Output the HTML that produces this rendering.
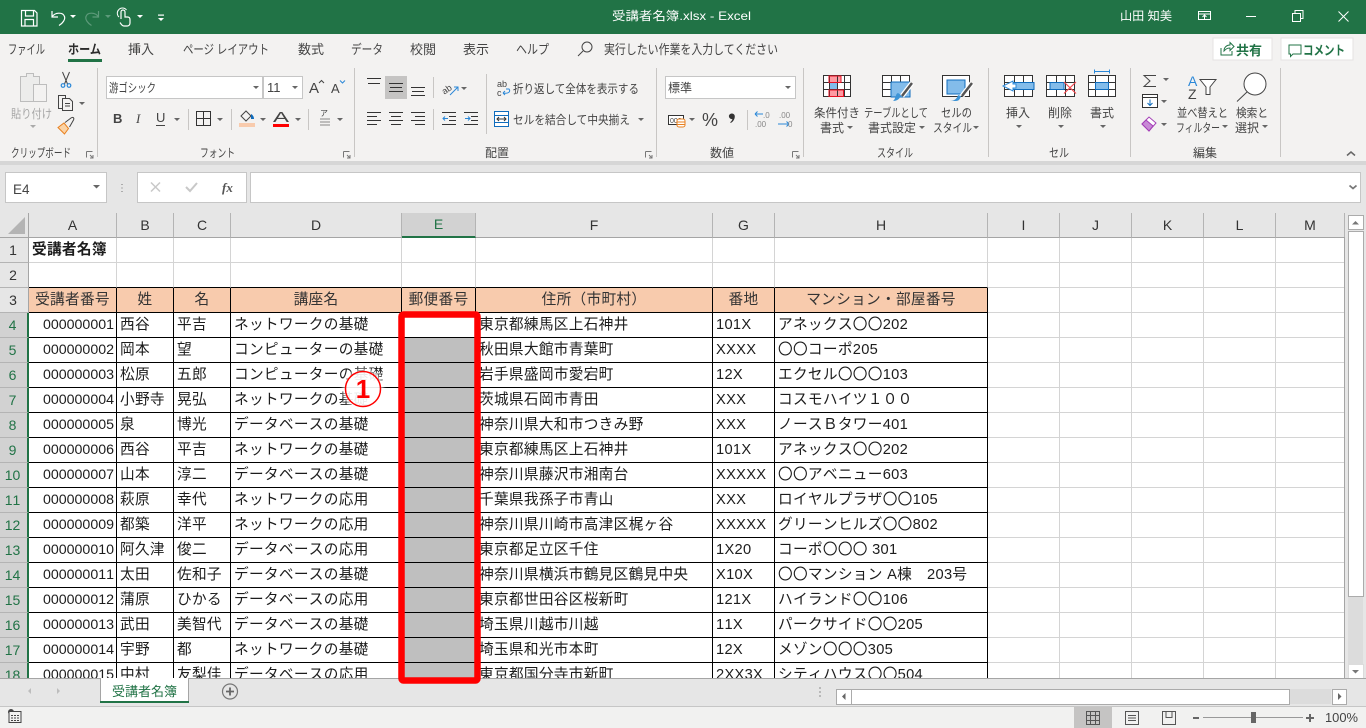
<!DOCTYPE html>
<html lang="ja"><head><meta charset="utf-8"><title>受講者名簿.xlsx - Excel</title>
<style>
html,body{margin:0;padding:0;width:1366px;height:728px;overflow:hidden;background:#e6e6e6}
body{position:relative;font-family:"Liberation Sans","Noto Sans CJK JP",sans-serif}
#g{position:absolute;left:0;top:213px;width:1345px;height:465px;overflow:hidden;background:#fff}
table{border-collapse:separate;border-spacing:0;table-layout:fixed;width:1345px;font-size:14.67px;color:#1c1c1c;font-kerning:none}
tr{height:25px}
td,th{box-sizing:border-box;height:25px;padding:1px 0 0 3px;border-right:1px solid #d4d4d4;border-bottom:1px solid #d4d4d4;white-space:nowrap;overflow:hidden;font-weight:400;line-height:23px;text-align:left;letter-spacing:.3px}
.h td{background:#e6e6e6;border-color:#b4b4b4;color:#333;text-align:center;padding:0;font-size:14px;border-bottom-color:#a5a5a5;letter-spacing:0}
td.r{background:#e6e6e6;border-right:1px solid #a5a5a5;border-bottom-color:#b4b4b4;color:#333;text-align:center;padding:0 2px 0 0;font-size:14px;letter-spacing:0}
td.s{background:#d2d2d2;color:#217346;border-right:2px solid #217346}
.h td.e{background:#d2d2d2;color:#217346;border-bottom:2px solid #217346}
.b{border-right-color:#000;border-bottom-color:#000}
.t td.b{background:#f8cbad;text-align:center;padding:1px 0 0 0;color:#333}
.u td.b{border-bottom-color:#000}
td.n{text-align:right;padding:1px 2px 0 0;font-size:14.2px;letter-spacing:0}
td.x{background:#bfbfbf}
td.w{background:#fff}
svg{position:absolute;left:0;top:0}
text{font-family:"Liberation Sans","Noto Sans CJK JP",sans-serif;font-size:12px;fill:#444}
.tab{font-size:13px}
.w1{fill:#fff}
.l{stroke:#444;stroke-width:1;fill:none}
.d{fill:#666}
</style></head><body>
<div id="g"><table>
<colgroup><col style="width:29px"><col style="width:88px"><col style="width:57px"><col style="width:57px"><col style="width:171px"><col style="width:74px"><col style="width:237px"><col style="width:62px"><col style="width:213px"><col style="width:72px"><col style="width:72px"><col style="width:72px"><col style="width:72px"><col style="width:69px"></colgroup>
<tr class="h"><td></td><td>A</td><td>B</td><td>C</td><td>D</td><td class="e">E</td><td>F</td><td>G</td><td>H</td><td>I</td><td>J</td><td>K</td><td>L</td><td>M</td></tr>
<tr><td class="r">1</td><td style="font-weight:700">受講者名簿</td><td></td><td></td><td></td><td></td><td></td><td></td><td></td><td></td><td></td><td></td><td></td><td></td></tr>
<tr class="u"><td class="r">2</td><td class="b" style="border-right-color:#d4d4d4"></td><td class="b" style="border-right-color:#d4d4d4"></td><td class="b" style="border-right-color:#d4d4d4"></td><td class="b" style="border-right-color:#d4d4d4"></td><td class="b" style="border-right-color:#d4d4d4"></td><td class="b" style="border-right-color:#d4d4d4"></td><td class="b" style="border-right-color:#d4d4d4"></td><td class="b" style="border-right-color:#d4d4d4"></td><td></td><td></td><td></td><td></td><td></td></tr>
<tr class="t"><td class="r">3</td><td class="b">受講者番号</td><td class="b">姓</td><td class="b">名</td><td class="b">講座名</td><td class="b">郵便番号</td><td class="b">住所（市町村）</td><td class="b">番地</td><td class="b">マンション・部屋番号</td><td></td><td></td><td></td><td></td><td></td></tr>
<tr><td class="r s">4</td><td class="b n">000000001</td><td class="b">西谷</td><td class="b">平吉</td><td class="b">ネットワークの基礎</td><td class="b w"></td><td class="b">東京都練馬区上石神井</td><td class="b">101X</td><td class="b">アネックス〇〇202</td><td></td><td></td><td></td><td></td><td></td></tr>
<tr><td class="r s">5</td><td class="b n">000000002</td><td class="b">岡本</td><td class="b">望</td><td class="b">コンピューターの基礎</td><td class="b x"></td><td class="b">秋田県大館市青葉町</td><td class="b">XXXX</td><td class="b">〇〇コーポ205</td><td></td><td></td><td></td><td></td><td></td></tr>
<tr><td class="r s">6</td><td class="b n">000000003</td><td class="b">松原</td><td class="b">五郎</td><td class="b">コンピューターの基礎</td><td class="b x"></td><td class="b">岩手県盛岡市愛宕町</td><td class="b">12X</td><td class="b">エクセル〇〇〇103</td><td></td><td></td><td></td><td></td><td></td></tr>
<tr><td class="r s">7</td><td class="b n">000000004</td><td class="b">小野寺</td><td class="b">晃弘</td><td class="b">ネットワークの基礎</td><td class="b x"></td><td class="b">茨城県石岡市青田</td><td class="b">XXX</td><td class="b">コスモハイツ１００</td><td></td><td></td><td></td><td></td><td></td></tr>
<tr><td class="r s">8</td><td class="b n">000000005</td><td class="b">泉</td><td class="b">博光</td><td class="b">データベースの基礎</td><td class="b x"></td><td class="b">神奈川県大和市つきみ野</td><td class="b">XXX</td><td class="b">ノースＢタワー401</td><td></td><td></td><td></td><td></td><td></td></tr>
<tr><td class="r s">9</td><td class="b n">000000006</td><td class="b">西谷</td><td class="b">平吉</td><td class="b">ネットワークの基礎</td><td class="b x"></td><td class="b">東京都練馬区上石神井</td><td class="b">101X</td><td class="b">アネックス〇〇202</td><td></td><td></td><td></td><td></td><td></td></tr>
<tr><td class="r s">10</td><td class="b n">000000007</td><td class="b">山本</td><td class="b">淳二</td><td class="b">データベースの基礎</td><td class="b x"></td><td class="b">神奈川県藤沢市湘南台</td><td class="b">XXXXX</td><td class="b">〇〇アベニュー603</td><td></td><td></td><td></td><td></td><td></td></tr>
<tr><td class="r s">11</td><td class="b n">000000008</td><td class="b">萩原</td><td class="b">幸代</td><td class="b">ネットワークの応用</td><td class="b x"></td><td class="b">千葉県我孫子市青山</td><td class="b">XXX</td><td class="b">ロイヤルプラザ〇〇105</td><td></td><td></td><td></td><td></td><td></td></tr>
<tr><td class="r s">12</td><td class="b n">000000009</td><td class="b">都築</td><td class="b">洋平</td><td class="b">ネットワークの応用</td><td class="b x"></td><td class="b">神奈川県川崎市高津区梶ヶ谷</td><td class="b">XXXXX</td><td class="b">グリーンヒルズ〇〇802</td><td></td><td></td><td></td><td></td><td></td></tr>
<tr><td class="r s">13</td><td class="b n">000000010</td><td class="b">阿久津</td><td class="b">俊二</td><td class="b">データベースの応用</td><td class="b x"></td><td class="b">東京都足立区千住</td><td class="b">1X20</td><td class="b">コーポ〇〇〇 301</td><td></td><td></td><td></td><td></td><td></td></tr>
<tr><td class="r s">14</td><td class="b n">000000011</td><td class="b">太田</td><td class="b">佐和子</td><td class="b">データベースの基礎</td><td class="b x"></td><td class="b">神奈川県横浜市鶴見区鶴見中央</td><td class="b">X10X</td><td class="b">〇〇マンション A棟　203号</td><td></td><td></td><td></td><td></td><td></td></tr>
<tr><td class="r s">15</td><td class="b n">000000012</td><td class="b">蒲原</td><td class="b">ひかる</td><td class="b">データベースの応用</td><td class="b x"></td><td class="b">東京都世田谷区桜新町</td><td class="b">121X</td><td class="b">ハイランド〇〇106</td><td></td><td></td><td></td><td></td><td></td></tr>
<tr><td class="r s">16</td><td class="b n">000000013</td><td class="b">武田</td><td class="b">美智代</td><td class="b">データベースの基礎</td><td class="b x"></td><td class="b">埼玉県川越市川越</td><td class="b">11X</td><td class="b">パークサイド〇〇205</td><td></td><td></td><td></td><td></td><td></td></tr>
<tr><td class="r s">17</td><td class="b n">000000014</td><td class="b">宇野</td><td class="b">都</td><td class="b">ネットワークの基礎</td><td class="b x"></td><td class="b">埼玉県和光市本町</td><td class="b">12X</td><td class="b">メゾン〇〇〇305</td><td></td><td></td><td></td><td></td><td></td></tr>
<tr><td class="r s">18</td><td class="b n">000000015</td><td class="b">中村</td><td class="b">友梨佳</td><td class="b">データベースの応用</td><td class="b x"></td><td class="b">東京都国分寺市新町</td><td class="b">2XX3X</td><td class="b">シティハウス〇〇504</td><td></td><td></td><td></td><td></td><td></td></tr>
</table></div>

<svg width="1366" height="728" viewBox="0 0 1366 728">
<defs><filter id="bl" x="-30%" y="-30%" width="160%" height="160%"><feGaussianBlur stdDeviation="2"/></filter></defs>
<!-- backgrounds -->
<rect x="0" y="0" width="1366" height="34" fill="#217346"/>
<rect x="0" y="34" width="1366" height="127" fill="#f3f2f1"/>
<rect x="0" y="161" width="1366" height="4" fill="#d6d6d6"/>
<rect x="0" y="165" width="1366" height="48" fill="#e6e6e6"/>
<rect x="1345" y="213" width="21" height="465" fill="#e6e6e6"/>
<rect x="1344" y="237" width="1" height="441" fill="#a5a5a5"/>
<!-- title bar -->
<g fill="none" stroke="#fff" stroke-width="1.2">
<path d="M21.5 10.500h13l2.500 2.500v13h-15.500z"/><path d="M25.500 10.500v5.500h8v-5.500"/><path d="M25 26v-6.500h8.500v6.500"/>
<path d="M52 11v6h6M52 17c3-5 11-5 12.500-.5c1 3-2 7-5.500 9"/>
<path d="M98.500 11v6h-6M98.500 17c-3-5-11-5-12.500-.5c-1 3 2 7 5.500 9" stroke="#5d9a7a"/>
<path d="M121 19v-7a2 2 0 0 1 4 0v5h2.500c2 0 2.500 1 2.500 3v3c0 2-1.500 3-3 3h-3c-2 0-3-2-4-3.500"/><path d="M119 17a5 5 0 0 1-.5-7a5 5 0 0 1 8 0" stroke-width="1"/>
</g>
<path d="M70 15h6l-3 3z" fill="#fff"/><path d="M105 15h6l-3 3z" fill="#5d9a7a"/>
<path d="M137 15h6l-3 3zM158 18h6l-3 3z" fill="#fff"/><rect x="158" y="14.500" width="6" height="1.200" fill="#fff"/>
<text x="612" y="20" class="w1" textLength="139" lengthAdjust="spacingAndGlyphs">受講者名簿.xlsx  -  Excel</text>
<text x="1120" y="20" class="w1" textLength="52" lengthAdjust="spacingAndGlyphs">山田 知美</text>
<g fill="none" stroke="#fff" stroke-width="1">
<path d="M1198.500 11.500h12v8h-12zM1198.500 14h12M1204.500 19v-3.500M1202.500 17l2-2l2 2"/>
<path d="M1246 16.500h10"/>
<path d="M1292.500 13.500h8v8h-8zM1295 13v-2.500h8v8h-2.500"/>
<path d="M1338.500 11.500l10 10M1348.500 11.500l-10 10"/>
</g>
<!-- tabs -->
<g class="tab">
<text class="tab" x="8" y="54" textLength="37" lengthAdjust="spacingAndGlyphs">ファイル</text>
<text class="tab" x="68" y="54" textLength="33" lengthAdjust="spacingAndGlyphs" style="font-weight:700;fill:#2b2b2b">ホーム</text>
<text class="tab" x="128" y="54" textLength="26" lengthAdjust="spacingAndGlyphs">挿入</text>
<text class="tab" x="183" y="54" textLength="86" lengthAdjust="spacingAndGlyphs">ページ レイアウト</text>
<text class="tab" x="298" y="54" textLength="26" lengthAdjust="spacingAndGlyphs">数式</text>
<text class="tab" x="351" y="54" textLength="32" lengthAdjust="spacingAndGlyphs">データ</text>
<text class="tab" x="410" y="54" textLength="26" lengthAdjust="spacingAndGlyphs">校閲</text>
<text class="tab" x="463" y="54" textLength="26" lengthAdjust="spacingAndGlyphs">表示</text>
<text class="tab" x="516" y="54" textLength="33" lengthAdjust="spacingAndGlyphs">ヘルプ</text>
<text class="tab" x="604" y="54" textLength="174" lengthAdjust="spacingAndGlyphs">実行したい作業を入力してください</text>
</g>
<rect x="68" y="59" width="34" height="3" fill="#217346"/>
<circle cx="587" cy="47" r="5" class="l"/><path d="M583 51l-5 5" class="l"/>
<rect x="1213" y="38" width="59" height="22" fill="#fff" stroke="#e4e3e2"/>
<rect x="1281" y="38" width="72" height="22" fill="#fff" stroke="#e4e3e2"/>
<path d="M1221 48v7h11v-4M1224 51c0-4 3-6 6-6v-2.500l4 4l-4 4v-2.500c-3 0-4 1-6 3z" fill="none" stroke="#217346"/>
<text x="1236" y="55" textLength="26" lengthAdjust="spacingAndGlyphs" style="font-size:13px;font-weight:700;fill:#217346">共有</text>
<path d="M1289 45h12v9h-8l-2.500 2.500v-2.500h-1.500z" fill="none" stroke="#217346"/>
<text x="1303" y="55" textLength="42" lengthAdjust="spacingAndGlyphs" style="font-size:13px;font-weight:700;fill:#217346">コメント</text>
<!-- separators -->
<g fill="#c8c6c4"><rect x="97" y="68" width="1" height="89"/><rect x="354" y="68" width="1" height="89"/><rect x="656" y="68" width="1" height="89"/><rect x="803" y="68" width="1" height="89"/><rect x="988" y="68" width="1" height="89"/><rect x="1130" y="68" width="1" height="89"/><rect x="1280" y="68" width="1" height="89"/>
<rect x="188" y="109" width="1" height="21"/><rect x="231" y="109" width="1" height="21"/><rect x="308" y="109" width="1" height="21"/><rect x="433" y="77" width="1" height="21"/><rect x="433" y="109" width="1" height="21"/><rect x="486" y="74" width="1" height="60"/><rect x="747" y="110" width="1" height="20"/></g>
<!-- group labels -->
<g>
<text x="11" y="157" textLength="60" lengthAdjust="spacingAndGlyphs">クリップボード</text>
<text x="200" y="157" textLength="35" lengthAdjust="spacingAndGlyphs">フォント</text>
<text x="485" y="157" textLength="24" lengthAdjust="spacingAndGlyphs">配置</text>
<text x="710" y="157" textLength="24" lengthAdjust="spacingAndGlyphs">数値</text>
<text x="877" y="157" textLength="36" lengthAdjust="spacingAndGlyphs">スタイル</text>
<text x="1049" y="157" textLength="20" lengthAdjust="spacingAndGlyphs">セル</text>
<text x="1193" y="157" textLength="24" lengthAdjust="spacingAndGlyphs">編集</text>
</g>
<g fill="none" stroke="#777" stroke-width="1"><path d="M86.500 151.500h6M86.500 151.500v6M90 155l3 3M93 155v3h-3"/><path d="M343.500 151.500h6M343.500 151.500v6M347 155l3 3M350 155v3h-3"/><path d="M645.500 151.500h6M645.500 151.500v6M649 155l3 3M652 155v3h-3"/><path d="M792.500 151.500h6M792.500 151.500v6M796 155l3 3M799 155v3h-3"/></g>
<path d="M1347 155.500l4-3.500l4 3.500" fill="none" stroke="#666" stroke-width="1.500"/>
<!-- clipboard -->
<path d="M20.500 76.500h6v-3h7v3h6v25h-19z" fill="#ececeb" stroke="#bdbdbd"/><rect x="33.500" y="84.500" width="13" height="17" fill="#f3f2f1" stroke="#bdbdbd"/>
<text x="11" y="118" textLength="41" lengthAdjust="spacingAndGlyphs" style="fill:#a6a6a6">貼り付け</text>
<path d="M30 125h6l-3 3z" fill="#aaa"/>
<path d="M62.500 72l5 12M69.500 72l-5 12" stroke="#444" fill="none"/><circle cx="63" cy="85.500" r="1.800" fill="none" stroke="#2b88d8" stroke-width="1.200"/><circle cx="69" cy="85.500" r="1.800" fill="none" stroke="#2b88d8" stroke-width="1.200"/>
<path d="M62 108.500h-3.500v-13h7v3" class="l"/><path d="M62.500 98.500h7l3 3v9h-10z" class="l"/><path d="M65 103.500h5M65 106h5" class="l"/><path d="M79 102h6l-3 3z" class="d"/>
<path d="M58 127.500l6-4.500l4.500 5.500l-4 5.500z" fill="#fbd3a5" stroke="#e8801f"/><path d="M65 122.500l6-4.500c2-1.500 3.500 0 2.500 2l-4 7" fill="none" stroke="#444"/>
<!-- font -->
<rect x="106.500" y="76.500" width="156" height="22" fill="#fff" stroke="#c6c6c6"/><rect x="263.500" y="76.500" width="39" height="22" fill="#fff" stroke="#c6c6c6"/>
<text x="109" y="92" textLength="47" lengthAdjust="spacingAndGlyphs">游ゴシック</text>
<text x="267" y="92" style="font-size:13px">11</text>
<path d="M253 86h6l-3 3zM292 86h6l-3 3z" class="d"/>
<text x="309" y="93" style="font-size:15px">A</text><path d="M319 83l2.500-2.500l2.500 2.500" class="l" stroke-width=".9"/>
<text x="331" y="93" style="font-size:13px">A</text><path d="M340 80.500l2.500 2.500l2.500-2.500" stroke="#2b88d8" fill="none"/>
<text x="113" y="123" style="font-size:13px;font-weight:700">B</text>
<text x="136" y="123" style="font-size:13px;font-style:italic;font-family:'Liberation Serif',serif">I</text>
<text x="156" y="122" style="font-size:13px">U</text><rect x="156" y="125" width="9" height="1" fill="#444"/>
<path d="M174 118h6l-3 3zM217 118h6l-3 3zM260 118h6l-3 3zM295 118h6l-3 3zM337 118h6l-3 3z" class="d"/>
<path d="M196.500 111.500h14v14h-14zM203.500 111.500v14M196.500 118.500h14" stroke="#333" fill="none"/>
<path d="M241 116l5-5l5 5l-5 5z" fill="none" stroke="#444"/><path d="M251 114c2 1 3 3 3 5h-3z" fill="#0f6cbd"/><rect x="239" y="123" width="16" height="4" fill="#f8cbad"/>
<text x="273" y="122" textLength="16" lengthAdjust="spacingAndGlyphs" style="font-size:15px">A</text><rect x="273" y="124" width="16" height="3" fill="#f00"/>
<text x="320" y="116" style="font-size:8px">ア</text><path d="M320 119h10M320 122h10M320 125h10" stroke="#888" fill="none"/>
<!-- align -->
<rect x="385" y="76" width="22" height="23" fill="#c5c4c3"/>
<g stroke="#333" fill="none">
<path d="M367 78.500h14M368 83.500h12M389 83.500h14M390 87.500h12M389 91.500h14M411 87.500h14M412 91.500h12M411 95.500h14"/>
<path d="M367 112.500h14M367 116.500h10M367 120.500h14M367 124.500h10M389 112.500h14M391 116.500h10M389 120.500h14M391 124.500h10M411 112.500h14M415 116.500h10M411 120.500h14M415 124.500h10"/>
<path d="M442 112.500h14M449 116.500h7M449 120.500h7M442 124.500h14M464 112.500h14M471 116.500h7M471 120.500h7M464 124.500h14"/>
</g>
<path d="M448 118.500h-5m2-2l-2 2l2 2M465 118.500h5m-2-2l2 2l-2 2" stroke="#2b88d8" fill="none"/>
<text x="441" y="92" transform="rotate(-35 447 88)" style="font-size:9px">ab</text><path d="M450 95l8-8m-4 0h4v4" stroke="#2b88d8" fill="none"/><path d="M461 87h6l-3 3z" class="d"/>
<text x="497" y="87" style="font-size:9px">ab</text><text x="497" y="96" style="font-size:9px">c</text><path d="M503 93c5 1 8-1 6-4h-3M503 93l2-2M503 93l2 2" stroke="#2b88d8" fill="none"/>
<text x="513" y="93" textLength="126" lengthAdjust="spacingAndGlyphs">折り返して全体を表示する</text>
<path d="M494.500 111.500h14v15h-14z" stroke="#0f6cbd" fill="#fff"/><path d="M494.500 115.500h14M494.500 122.500h14" stroke="#0f6cbd"/><path d="M497 119h9m-7-2l-2 2l2 2m5-4l2 2l-2 2" stroke="#333" fill="none"/>
<text x="513" y="124" textLength="117" lengthAdjust="spacingAndGlyphs">セルを結合して中央揃え</text>
<path d="M638 118h6l-3 3z" class="d"/>
<!-- number -->
<rect x="665.500" y="76.500" width="130" height="22" fill="#fff" stroke="#c6c6c6"/>
<text x="668" y="92" textLength="24" lengthAdjust="spacingAndGlyphs">標準</text>
<path d="M785 86h6l-3 3z" class="d"/>
<rect x="668.500" y="115.500" width="15" height="9" fill="#fff" stroke="#333"/><text x="670" y="123" style="font-size:7px">000</text><rect x="677" y="119" width="8" height="8" rx="2" fill="#fff" stroke="#e8801f"/><path d="M677 122h8M677 124.500h8" stroke="#e8801f"/>
<path d="M689 118h6l-3 3z" class="d"/>
<text x="702" y="126" style="font-size:18px">%</text>
<path d="M732 113.500a2.800 2.800 0 0 1 2.800 3c0 2.500-1.500 5-4 6.500l-.6-.7c1.200-1 2-2 2.200-3.300a2.800 2.800 0 1 1-.4-5.500z" fill="#333"/>
<path d="M755 114h8m-8 0l2.500-2.500m-2.500 2.500l2.500 2.500M778 124h11m0 0l-2.500-2.500m2.500 2.500l-2.500 2.500" stroke="#2b88d8" fill="none"/>
<text x="763" y="118" style="font-size:8px;fill:#888">.0</text><text x="755" y="127" style="font-size:8px;fill:#888">.00</text>
<text x="779" y="118" style="font-size:8px;fill:#888">.00</text><text x="788" y="127" style="font-size:8px;fill:#888">0</text>
<!-- styles -->
<g stroke="#333" fill="#fff"><rect x="823.500" y="75.500" width="27" height="21"/></g>
<rect x="829" y="76" width="12" height="6.500" fill="#ff9aa2" stroke="#e81123"/><rect x="829" y="90" width="14.500" height="6.500" fill="#ff9aa2" stroke="#e81123"/><rect x="829" y="83" width="8" height="7" fill="#83bcea"/>
<path d="M823.500 82.500h27M823.500 89.500h27M829.500 75.500v21M837.500 75.500v21M844.500 75.500v21" stroke="#333" fill="none"/>
<rect x="829" y="76" width="12" height="6.500" fill="none" stroke="#e81123"/><rect x="829" y="90" width="14.500" height="6.500" fill="none" stroke="#e81123"/>
<rect x="882.500" y="75.500" width="27" height="21" fill="#fff" stroke="#333"/><path d="M882.500 82.500h27M882.500 89.500h27M891.500 75.500v21M900.500 75.500v21" stroke="#333" fill="none"/><rect x="891" y="82" width="19" height="15" fill="#83bcea" stroke="#0f6cbd"/>
<path d="M912 83l-10 13" stroke="#fff" stroke-width="5"/><path d="M912 83l-10 13" stroke="#555" stroke-width="2.500"/><path d="M893 101c4 0 7-2 8-6l-3-2c-3 1-2 6-5 8z" fill="#3d94d6"/>
<rect x="942.500" y="75.500" width="27" height="21" fill="#fff" stroke="#333"/><rect x="947" y="80" width="18" height="14" fill="#83bcea" stroke="#0f6cbd"/>
<path d="M972 83l-10 13" stroke="#fff" stroke-width="5"/><path d="M972 83l-10 13" stroke="#555" stroke-width="2.500"/><path d="M950 101c4 0 7-2 8-6l3 1c-1 3-2 5-5 5z" fill="#3d94d6"/>
<text x="814" y="117" textLength="46" lengthAdjust="spacingAndGlyphs">条件付き</text><text x="820" y="132" textLength="24" lengthAdjust="spacingAndGlyphs">書式</text>
<text x="864" y="117" textLength="64" lengthAdjust="spacingAndGlyphs">テーブルとして</text><text x="868" y="132" textLength="48" lengthAdjust="spacingAndGlyphs">書式設定</text>
<text x="941" y="117" textLength="31" lengthAdjust="spacingAndGlyphs">セルの</text><text x="933" y="132" textLength="39" lengthAdjust="spacingAndGlyphs">スタイル</text>
<path d="M847 126h6l-3 3zM919 126h6l-3 3zM973 126h6l-3 3z" class="d"/>
<!-- cells -->
<g stroke="#333" fill="#fff"><rect x="1004.500" y="75.500" width="28" height="21"/><rect x="1046.500" y="75.500" width="28" height="21"/><rect x="1088.500" y="75.500" width="27" height="21"/></g>
<path d="M1004.500 82.500h28M1004.500 89.500h28M1014.500 75.500v21M1023.500 75.500v21M1046.500 82.500h28M1046.500 89.500h28M1056.500 75.500v21M1065.500 75.500v21M1088.500 82.500h27M1088.500 89.500h27M1095.500 75.500v21M1108.500 75.500v21" stroke="#333" fill="none"/>
<rect x="1012" y="82.500" width="22" height="7" fill="#83bcea" stroke="#0f6cbd"/><path d="M1013 84h3v4h-3v3l-10-5l10-5z" fill="#fff" stroke="#2b88d8"/>
<rect x="1050" y="82.500" width="14" height="7" fill="#83bcea" stroke="#0f6cbd"/><path d="M1064 82l12 11.500M1076 82l-12 11.500" stroke="#f4474d" stroke-width="1.200"/>
<rect x="1095.500" y="82.500" width="13" height="7" fill="#83bcea" stroke="#0f6cbd"/><path d="M1094.500 71.500h15M1094.500 69.500v4M1109.500 69.500v4" stroke="#2b88d8" fill="none"/>
<text x="1006" y="117" textLength="24" lengthAdjust="spacingAndGlyphs">挿入</text><text x="1048" y="117" textLength="24" lengthAdjust="spacingAndGlyphs">削除</text><text x="1090" y="117" textLength="24" lengthAdjust="spacingAndGlyphs">書式</text>
<path d="M1016 125h6l-3 3zM1058 125h6l-3 3zM1100 125h6l-3 3z" class="d"/>
<!-- edit -->
<path d="M1156 75.500h-12l6 5.500l-6 5.500h12" fill="none" stroke="#444"/><path d="M1163 78h6l-3 3zM1161 100h6l-3 3zM1161 123h6l-3 3z" class="d"/>
<rect x="1142.500" y="94.500" width="15" height="13" fill="#fff" stroke="#333"/><path d="M1142.500 97.500h15" stroke="#333"/><path d="M1150 99.500v6m-2.500-2.500l2.500 2.500l2.500-2.500" stroke="#0f6cbd" fill="none"/>
<path d="M1142 124l7-7l7 6l-7 8z" fill="#fff" stroke="#a43fb7"/><path d="M1142 124l4-4l7 6l-4 5z" fill="#c88ad6" stroke="#a43fb7"/>
<text x="1188" y="86" style="font-size:14px;fill:#2b88d8">A</text><text x="1188" y="99" style="font-size:14px">Z</text>
<path d="M1200 79.500h16l-6 7.500v7.500h-4v-7.500z" fill="#fff" stroke="#444"/>
<text x="1177" y="117" textLength="51" lengthAdjust="spacingAndGlyphs">並べ替えと</text><text x="1176" y="132" textLength="44" lengthAdjust="spacingAndGlyphs">フィルター</text>
<path d="M1222 125h6l-3 3z" class="d"/>
<circle cx="1255" cy="84" r="11" fill="#fff" stroke="#444"/><path d="M1247 92l-10 9.500" stroke="#444" fill="none"/>
<text x="1236" y="117" textLength="32" lengthAdjust="spacingAndGlyphs">検索と</text><text x="1235" y="132" textLength="24" lengthAdjust="spacingAndGlyphs">選択</text>
<path d="M1262 125h6l-3 3z" class="d"/>
<!-- formula bar -->
<rect x="5.500" y="172.500" width="101" height="30" fill="#fff" stroke="#c6c6c6"/>
<text x="13" y="194" style="font-size:13.500px">E4</text><path d="M93 185h7l-3.500 3.500z" class="d"/>
<path d="M122 184v1M122 187.500v1M122 191v1" stroke="#999" stroke-width="1.500"/>
<rect x="137.500" y="172.500" width="109" height="30" fill="#fff" stroke="#c6c6c6"/>
<path d="M151 182.500l9 9M160 182.500l-9 9" stroke="#c8c8c8" stroke-width="1.500" fill="none"/>
<path d="M186 187l4 4l7-8" stroke="#c8c8c8" stroke-width="2" fill="none"/>
<text x="222" y="192" style="font-size:13px;font-style:italic;font-weight:700;font-family:'Liberation Serif',serif;fill:#555">fx</text>
<rect x="250.500" y="172.500" width="1110" height="30" fill="#fff" stroke="#c6c6c6"/>
<path d="M1349.500 185.500l3.500 3l3.500-3" stroke="#777" stroke-width="1.800" fill="none"/>
<!-- corner triangle -->
<path d="M25 217v17h-17z" fill="#b4b4b4"/>
<rect x="28" y="213" width="1" height="25" fill="#a5a5a5"/>
<!-- vertical scrollbar -->
<rect x="1348" y="232" width="15" height="432" fill="#dcdcdc"/>
<rect x="1348.500" y="215.500" width="15" height="14" fill="#fff" stroke="#ababab"/>
<path d="M1352 224.500h7l-3.500-3.500z" fill="#777"/>
<rect x="1348.500" y="231.500" width="15" height="365" fill="#fff" stroke="#ababab"/>
<rect x="1348.500" y="664.500" width="15" height="14" fill="#fff" stroke="#dcdcdc"/>
<path d="M1352 670h7l-3.500 3.500z" fill="#777"/>
<!-- tab bar -->
<rect x="0" y="678" width="1366" height="28" fill="#e6e6e6"/>
<rect x="0" y="678" width="1366" height="1" fill="#a5a5a5"/>
<path d="M31 688v6l-3-3zM57 688v6l3-3z" fill="#bdbdbd"/>
<rect x="100" y="678" width="89" height="24" fill="#fff"/><rect x="100" y="678" width="1" height="24" fill="#a5a5a5"/><rect x="188" y="678" width="1" height="24" fill="#a5a5a5"/><rect x="100" y="701" width="89" height="2" fill="#217346"/>
<text x="112" y="696" textLength="65" lengthAdjust="spacingAndGlyphs" style="font-size:13px;fill:#217346">受講者名簿</text>
<circle cx="230" cy="691.500" r="7.500" fill="none" stroke="#777" stroke-width="1.200"/><path d="M226 691.500h8M230 687.500v8" stroke="#666" stroke-width="1.800"/>
<path d="M820 687v2M820 691v2M820 695v2" stroke="#aaa" stroke-width="1.500"/>
<rect x="836" y="689" width="495" height="15" fill="#dcdcdc"/>
<rect x="836.500" y="689.500" width="15" height="15" fill="#fff" stroke="#ababab"/><path d="M845.500 693v7l-3.500-3.500z" fill="#666"/>
<rect x="851.500" y="689.500" width="438" height="15" fill="#fff" stroke="#ababab"/>
<rect x="1332.500" y="689.500" width="14" height="15" fill="#fff" stroke="#ababab"/><path d="M1338 693v7l3.500-3.500z" fill="#666"/>
<!-- status bar -->
<rect x="0" y="706" width="1366" height="22" fill="#f1f1f0"/><rect x="0" y="706" width="1366" height="1" fill="#c6c6c6"/>
<circle cx="11" cy="712" r="3" fill="#444"/><path d="M9 711.500h12v11h-12z" fill="#f1f1f0" stroke="#444"/><path d="M11 715.500h8M11 718h8M11 720.500h8" stroke="#444" stroke-dasharray="2 1"/>
<rect x="1074" y="707" width="38" height="21" fill="#c5c4c3"/>
<path d="M1086.500 711.500h13v13h-13zM1086.500 715.500h13M1086.500 720.500h13M1090.500 711.500v13M1095.500 711.500v13" stroke="#555" fill="none"/>
<path d="M1125.500 711.500h13v13h-13zM1128 715.500h8M1128 718h8M1128 720.500h8" stroke="#555" fill="none"/>
<path d="M1162.500 711.500h13v13h-13zM1166 711.500v6h6v-6" stroke="#555" fill="none"/>
<path d="M1193 718h6" stroke="#666" stroke-width="2"/><rect x="1203" y="717" width="100" height="1" fill="#999"/><rect x="1251" y="712" width="5" height="11" fill="#666"/><path d="M1306 718h8M1310 714v8" stroke="#666" stroke-width="2"/>
<text x="1325" y="722" textLength="33" lengthAdjust="spacingAndGlyphs" style="font-size:12.500px">100%</text>
<!-- red selection -->
<rect x="401.500" y="314.500" width="76" height="366" rx="2" fill="none" stroke="#f00" stroke-width="6.500"/>
<!-- annotation -->
<circle cx="363" cy="389" r="20" fill="#fff" opacity=".8" filter="url(#bl)"/>
<circle cx="363" cy="389" r="17.500" fill="#fff" fill-opacity=".55" stroke="#f00" stroke-width="1.500"/>
<text x="363" y="398" text-anchor="middle" style="font-size:26px;font-weight:700;fill:#f00">1</text>
</svg>
</body></html>
